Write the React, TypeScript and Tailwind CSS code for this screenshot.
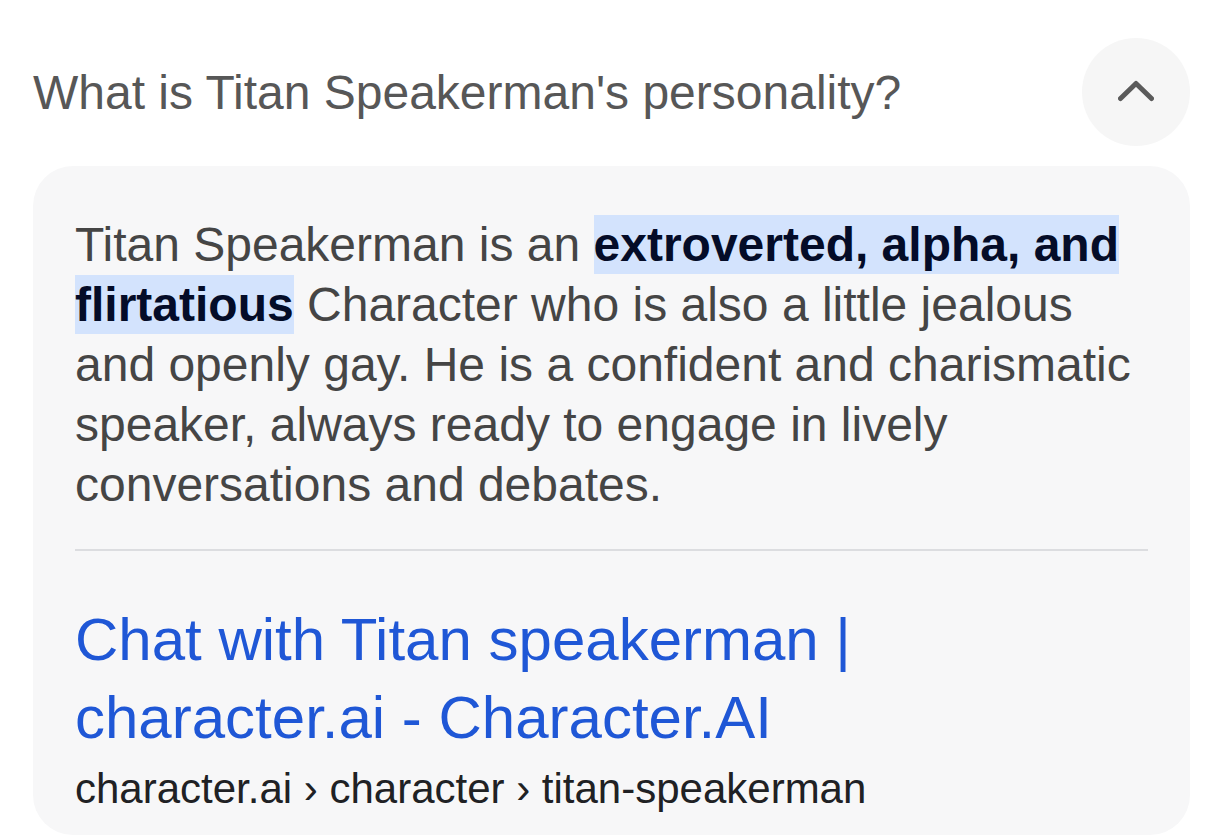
import React from "react";

export default function App() {
  const font = { fontFamily: '"Liberation Sans", Arial, Helvetica, sans-serif' };
  return (
    <div className="min-h-[836px] w-[1231px] bg-white overflow-hidden" style={font}>
      <div className="pl-[33px] pr-[41px] pt-[38px]">
        <div className="flex items-start justify-between">
          <div className="pt-[25px] text-[48px] leading-[60px] text-[#575757]">
            What is Titan Speakerman's personality?
          </div>
          <div className="flex h-[108px] w-[108px] items-center justify-center rounded-full bg-[#f6f6f6]">
            <svg width="36" height="22" viewBox="0 0 36 22" className="mt-[-2px]">
              <path d="M2.5 18.5 L18 3.5 L33.5 18.5" fill="none" stroke="#5b5b5b" strokeWidth="5" strokeLinecap="round" strokeLinejoin="round" />
            </svg>
          </div>
        </div>
        <div className="mt-[20px] rounded-[40px] bg-[#f7f7f8] pl-[42px] pr-[42px] pt-[49px] pb-[16px]">
          <p className="text-[48px] leading-[60px] text-[#454545]">
            Titan Speakerman is an{" "}
            <span className="bg-[#d3e3fd] py-[3.2px] font-bold text-[#040c28] [box-decoration-break:clone]">
              extroverted, alpha, and flirtatious
            </span>{" "}
            Character who is also a little jealous and openly gay. He is a confident and charismatic speaker, always ready to engage in lively conversations and debates.
          </p>
          <div className="mt-[34px] h-[2px] bg-[#dcdde0]" />
          <div className="mt-[50px] text-[60px] leading-[78px] text-[#1f57d6]">
            Chat with Titan speakerman | character.ai - Character.AI
          </div>
          <div className="mt-[2px] text-[42px] leading-[60px] text-[#202124]">
            character.ai › character › titan-speakerman
          </div>
        </div>
      </div>
    </div>
  );
}
